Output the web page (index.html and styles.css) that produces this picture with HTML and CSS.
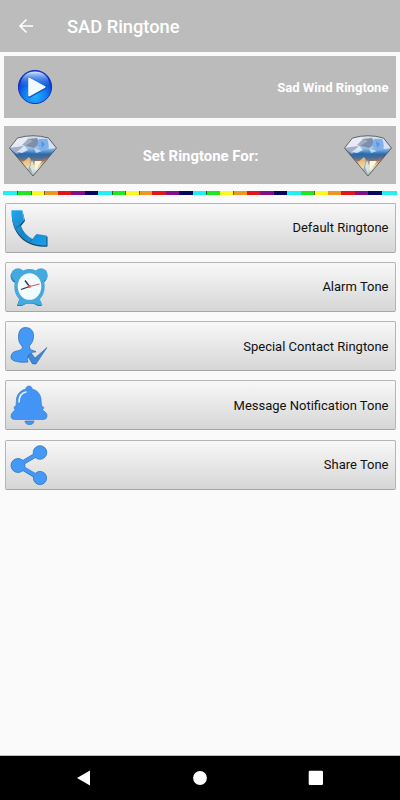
FILE: index.html
```html
<!DOCTYPE html>
<html lang="en">
<head>
    <meta charset="UTF-8">
    <meta name="viewport" content="width=device-width, initial-scale=1.0">
    <title>SAD Ringtone</title>
    <link rel="stylesheet" href="styles.css">
</head>
<body>
    <header class="app-bar">
        <svg class="back" viewBox="0 0 16 16"><path d="M15 8H2M8.500 1.500L2 8L8.500 14.500"/></svg>
        <h1>SAD Ringtone</h1>
    </header>

    <main>
        <section class="panel player">
            <svg class="play" viewBox="0 0 36 36">
                <defs>
                    <radialGradient id="ball" cx="50%" cy="78%" r="68%">
                        <stop offset="0" stop-color="#20b4ff"/>
                        <stop offset="0.5" stop-color="#107cf4"/>
                        <stop offset="1" stop-color="#0828c0"/>
                    </radialGradient>
                    <linearGradient id="shine" x2="0" y2="1">
                        <stop offset="0" stop-color="#d4ecff"/>
                        <stop offset="1" stop-color="#3088f4" stop-opacity="0.15"/>
                    </linearGradient>
                </defs>
                <circle cx="18" cy="18" r="16.6" fill="url(#ball)" stroke="#1430b8" stroke-width="1"/>
                <path d="M3.500 17C3.500 8 9 2.500 18 2.500s14.500 5.500 14.500 14.500c-8-2-21-2-29 0z" fill="url(#shine)"/>
                <path d="M12.2 9.5v18l16-9z" fill="#0c50c0" stroke="#0c50c0" stroke-width="2.6" stroke-linejoin="round"/>
                <path d="M12 9.200v17.600l15.800-8.800z" fill="#f0faff" stroke="#f0faff" stroke-width="1.6" stroke-linejoin="round"/>
            </svg>
            <span>Sad Wind Ringtone</span>
        </section>

        <section class="panel heading">
            <svg class="diamond" viewBox="0 0 50 44">
                <defs>
                    <linearGradient id="gem" x2="0" y2="1">
                        <stop offset="0" stop-color="#dce4ee"/>
                        <stop offset="0.28" stop-color="#b4cbe6"/>
                        <stop offset="0.38" stop-color="#5f9bd2"/>
                        <stop offset="0.46" stop-color="#3068a8"/>
                        <stop offset="0.55" stop-color="#62738c"/>
                        <stop offset="0.61" stop-color="#c28150"/>
                        <stop offset="0.7" stop-color="#f0c894"/>
                        <stop offset="0.82" stop-color="#e6eadc"/>
                        <stop offset="1" stop-color="#a8b8b8"/>
                    </linearGradient>
                </defs>
                <g id="diamond-shape">
                    <path d="M1.5 14L9.5 4Q25-.5 40.5 4L48.5 14L25 42z" fill="url(#gem)"/>
                    <path d="M9.5 4L20 3l-4 9L1.5 14z" fill="#f2f2fa" opacity="0.75"/>
                    <path d="M20 5l9-1 3 6-6 4-9-2z" fill="#7e8fae"/>
                    <path d="M20 5l5 2-8 5-3-1z" fill="#a2adbf"/>
                    <path d="M31 5l8 0 3 7-7 5-6-5z" fill="#7fb0ec"/>
                    <path d="M33 7l4 3-3 4z" fill="#5a92dc"/>
                    <path d="M40 5l8 9-7 1z" fill="#d5e1f6"/>
                    <path d="M2 14l14-2-7 8z" fill="#a6adc5"/>
                    <path d="M9 18l7-6 4 4-6 3z" fill="#eaf5ff" opacity="0.8"/>
                    <path d="M26 14l8 3-6 2z" fill="#c9e8ff" opacity="0.8"/>
                    <path d="M8 21l12-3 7 3 15-1-6 7H14z" fill="#276ba9" opacity="0.45"/>
                    <path d="M15 28l6-5 2 3-4 7z" fill="#f6ca84" opacity="0.8"/>
                    <path d="M24 26l-4 9 5 5 1-12z" fill="#7795a8" opacity="0.7"/>
                    <path d="M27 27l7 0-7 9z" fill="#fff7d8"/>
                    <path d="M35 25l4-2-7 8z" fill="#c56c38" opacity="0.7"/>
                    <path d="M24 26l2 6-1 8-3-7z" fill="#e4f5ed" opacity="0.8"/>
                    <path d="M1.5 14L9.5 4Q25-.5 40.5 4L48.5 14L25 42z" fill="none" stroke="#45474f" stroke-width="0.8"/>
                </g>
            </svg>
            <h2>Set Ringtone For:</h2>
            <svg class="diamond" viewBox="0 0 50 44"><use href="#diamond-shape"/></svg>
        </section>

        <div class="rainbow"></div>

        <div class="options">
            <button class="option">
                <svg viewBox="0 0 40 40">
                    <defs>
                        <linearGradient id="phone" x1="1" y1="1" x2="0" y2="0">
                            <stop offset="0" stop-color="#18a0ee"/>
                            <stop offset="0.5" stop-color="#1685c8"/>
                            <stop offset="1" stop-color="#22a5ee"/>
                        </linearGradient>
                    </defs>
                    <path d="M3 3C2 13 5 23 12 30c6 6 15 9.500 26.500 8.500V28.500L27 27l-4 5C18 29 14 24 12 18l4-5L13.500 3z" fill="#1c4765"/>
                    <path d="M2.500 2C2 12 5.500 22 12.500 29c6 6 14.500 8.500 25 8.500V27.500L27.500 26l-4 5C18 28 14 24 11 17l4.500-5L13 2z" fill="url(#phone)"/>
                    <path d="M11 17l-4 3M23.500 31l-3 3.500" stroke="#12608f" stroke-width="0.8"/>
                    <path d="M3 2.500h10l2 9.500" fill="none" stroke="#61caff" stroke-width="0.700"/>
                </svg>
                <span>Default Ringtone</span>
            </button>
            <button class="option">
                <svg viewBox="0 0 40 40">
                    <g fill="#287daa" transform="translate(-.6 .9)">
                        <circle cx="9" cy="8.500" r="6.800"/><circle cx="32" cy="8.500" r="6.800"/>
                        <path d="M12 28L8.500 38h5l4-2h8l4 2h4L29 28z"/>
                    </g>
                    <g fill="#43a9df">
                        <circle cx="9" cy="8" r="6.800"/><circle cx="32" cy="8" r="6.800"/>
                        <path d="M12 28L8.500 38h5l4-1.500h8l4 1.500h4L29 28z"/>
                        <ellipse cx="20.500" cy="19.500" rx="15.200" ry="17.500"/>
                    </g>
                    <ellipse cx="20.500" cy="19.500" rx="11.800" ry="13.300" fill="#f1fcff"/>
                    <path d="M16 13.500l4.500 6M12 22.500l8.500-3" stroke="#282f36" stroke-width="1.300"/>
                    <path d="M18.500 20l12-3" stroke="#df5961" stroke-width="1.100"/>
                    <circle cx="20.500" cy="19.500" r="1.400" fill="#df5961"/>
                </svg>
                <span>Alarm Tone</span>
            </button>
            <button class="option">
                <svg viewBox="0 0 40 40">
                    <path d="M16.500 1.500c5.500 0 8.500 4 8 9-.3 4-1 6-3.500 8.500-1 1.500-.5 4 1.500 5 1.500.6 3 1 4.500 1.800-5 0-10.500 4.200-8 10.200-8 .8-17-.5-17-4.500 0-5 3-6 8-7 3-1 4-2.500 3-4.500-2.500-2.500-3.500-5-3.500-9 0-5.500 2-9.500 7-9.500z" fill="#4498f6" stroke="#2c68ac" stroke-width="0.700"/>
                    <path d="M18.500 30l4-2.500 3.500 4.500L38 21.500 27 38h-3.500z" fill="#3b88de" stroke="#25568c" stroke-width="0.500"/>
                </svg>
                <span>Special Contact Ringtone</span>
            </button>
            <button class="option">
                <svg viewBox="0 0 40 40">
                    <path d="M17 4c-.5-4 6.500-4 6 0 5 1 8.500 5 9 10l.5 7c3 .5 2.500 3 1 3.500 1 2 5 3 4.500 6.500-.2 3-2 3.500-5 3.500H7c-3 0-5-.5-5-3.500 0-3 3-4.500 4-6.500-1.500-1-1-3.500 1-3.500l.5-7C8 9 12 5 17 4z" fill="#4494f6" stroke="#3175c4" stroke-width="0.600"/>
                    <path d="M16 36h9c0 5-9 5-9 0z" fill="#4494f6" stroke="#3175c4" stroke-width="0.600"/>
                    <path d="M10 17c0-6 2-9 7-10" fill="none" stroke="#ecf8ff" stroke-width="1.500" stroke-linecap="round"/>
                </svg>
                <span>Message Notification Tone</span>
            </button>
            <button class="option">
                <svg viewBox="0 0 40 40">
                    <path d="M31 7.500L9 20.500l22 13" fill="none" stroke="#3275bd" stroke-width="4.600"/>
                    <g fill="#4498f6" stroke="#3275bd" stroke-width="0.800">
                        <circle cx="31" cy="7.500" r="6.800"/>
                        <circle cx="9" cy="20.500" r="7"/>
                        <circle cx="31" cy="33" r="6.600"/>
                    </g>
                    <path d="M31 7.500L9 20.500l22 12.500" fill="none" stroke="#4498f6" stroke-width="3.600"/>
                </svg>
                <span>Share Tone</span>
            </button>
        </div>
    </main>

    <nav class="system-nav">
        <svg viewBox="0 0 16 16"><path d="M14 .5v15L1 8z"/></svg>
        <svg viewBox="0 0 16 16"><circle cx="8" cy="8" r="6.900"/></svg>
        <svg viewBox="0 0 16 16"><rect x="0.700" y="0.700" width="14.300" height="14.300" rx="1.200"/></svg>
    </nav>
</body>
</html>
```

FILE: styles.css
```css
* {
    box-sizing: border-box;
}
body {
    font-family: Roboto, "Liberation Sans", sans-serif;
    margin: 0;
    height: 100vh;
    display: flex;
    flex-direction: column;
    background-color: #fafafa;
    color: #111;
}
svg {
    display: block;
    flex: none;
}
.app-bar {
    height: 52px;
    padding: 0 18px;
    display: flex;
    align-items: center;
    gap: 33px;
    background-color: #bcbcbc;
    color: white;
}
.app-bar h1 {
    margin: 2px 0 0;
    font-size: 18.3px;
    font-weight: 500;
    line-height: 24px;
}
.back {
    width: 16px;
    height: 16px;
    fill: none;
    stroke: white;
    stroke-width: 1.6;
}
main {
    flex: 1;
    padding-top: 4px;
}
.panel {
    margin: 0 4px;
    display: flex;
    align-items: center;
    justify-content: space-between;
    background-color: #bbb;
    color: white;
    font-weight: 700;
}
.player {
    height: 62px;
    padding: 1px 7.5px 0 13px;
    font-size: 13.1px;
}
.play {
    width: 36px;
    height: 36px;
    margin-bottom: 2px;
}
.heading {
    height: 58px;
    margin-top: 8px;
    padding: 0 3px 0 4px;
}
.heading h2 {
    margin: 2px 0 0;
    font-size: 14.9px;
}
.diamond {
    width: 50px;
    height: 44px;
    margin-top: 1px;
}
.rainbow {
    height: 4px;
    margin: 7px 3px 7.5px;
    background: #20f0f4 repeating-linear-gradient(90deg,
        #20f0f4 0 13.5px, #176b23 13.5px 14.2px,
        #20e720 14.2px 27px, #5d6518 27px 27.7px,
        #fafa22 27.7px 40.5px, #775923 40.5px 41.2px,
        #ed9722 41.2px 54px, #df1717 54px 67.4px,
        #851085 67.4px 80.9px, #060660 80.9px 94.4px) 1px 0 / 390px 100% no-repeat;
}
.options {
    padding: 0 4.5px;
    display: flex;
    flex-direction: column;
    gap: 9.25px;
}
.option {
    height: 50px;
    padding: 0 6px 0 3px;
    display: flex;
    align-items: center;
    justify-content: space-between;
    border: 1px solid #b5b5b5;
    border-bottom-color: #a6a6a6;
    border-radius: 2px;
    background: linear-gradient(#f8f8f8, #d6d6d6);
    color: #111;
    font-family: inherit;
    font-size: 13px;
}
.option svg {
    width: 40px;
    height: 40px;
}
.system-nav {
    height: 45px;
    padding: 0 76px;
    display: flex;
    align-items: center;
    justify-content: space-between;
    border-top: 1px solid #b8bcbc;
    background-color: #000;
}
.system-nav svg {
    width: 16px;
    height: 16px;
    fill: white;
}
```
